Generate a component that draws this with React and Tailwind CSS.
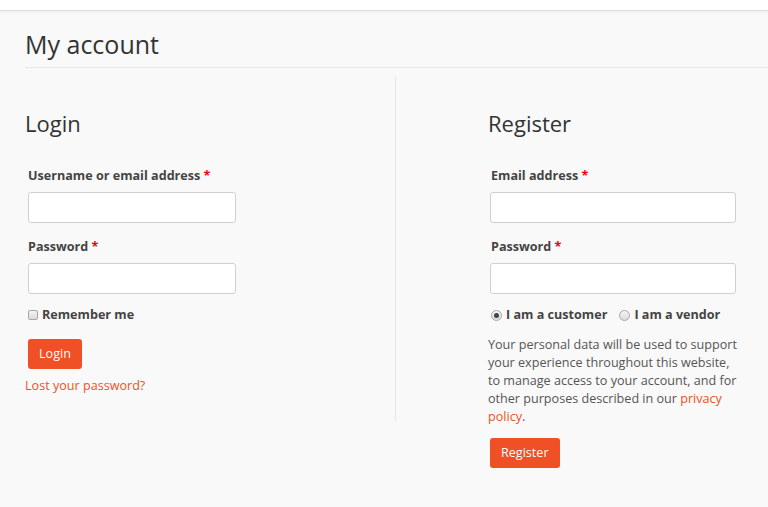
function Radio({ checked }) {
  return (
    <span className="inline-flex items-center justify-center w-[11px] h-[11px] rounded-full border border-[#a8a8a8] bg-gradient-to-b from-[#f4f4f4] to-[#dcdcdc]">
      {checked && <span className="w-[5px] h-[5px] rounded-full bg-[#444]" />}
    </span>
  );
}

export default function App() {
  return (
    <div className="min-h-[507px] bg-[#f9f9f9] text-[#444] font-['Open_Sans',sans-serif]">
      <div className="h-[11px] bg-white border-b border-[#dedede] shadow-[0_1px_3px_rgba(0,0,0,0.06)]" />
      <div className="pl-[25px]">
        <div className="border-b border-[#e8e8e8] pt-[16px] pb-[6px]">
          <h1 className="text-[25px] leading-[34px] font-normal text-[#333]">My account</h1>
        </div>
        <div className="flex items-start mt-[8px]">
          <div className="w-[371px] shrink-0 border-r border-[#e6e6e6] pb-[26px]">
            <h2 className="mt-[32px] text-[22px] leading-[30px] text-[#333]">Login</h2>
            <div className="pl-[3px] mt-[29px]">
              <label className="block text-[12.6px] font-bold leading-[18px]">
                Username or email address <span className="text-red-600">*</span>
              </label>
              <input className="block mt-[7px] w-[208px] h-[31px] bg-white border border-[#d0d0d0] rounded-[3px]" />
              <label className="block mt-[15px] text-[12.6px] font-bold leading-[18px]">
                Password <span className="text-red-600">*</span>
              </label>
              <input type="password" className="block mt-[7px] w-[208px] h-[31px] bg-white border border-[#d0d0d0] rounded-[3px]" />
              <label className="flex items-center gap-[4px] mt-[12px] text-[12.6px] font-bold leading-[18px]">
                <span className="w-[10px] h-[10px] rounded-[2px] border border-[#a8a8a8] bg-gradient-to-b from-[#f4f4f4] to-[#dcdcdc]" />
                Remember me
              </label>
              <button className="mt-[15px] h-[30px] px-[11px] rounded-[3px] bg-[#f05025] text-white text-[12.6px]">Login</button>
            </div>
            <a href="#" className="block mt-[8px] text-[12.6px] leading-[18px] text-[#f05025]">Lost your password?</a>
          </div>
          <div className="pl-[92px] pr-[16px] flex-1">
            <h2 className="mt-[32px] text-[22px] leading-[30px] text-[#333]">Register</h2>
            <div className="pl-[3px] mt-[29px]">
              <label className="block text-[12.6px] font-bold leading-[18px]">
                Email address <span className="text-red-600">*</span>
              </label>
              <input className="block mt-[7px] -ml-[1px] w-[246px] h-[31px] bg-white border border-[#d0d0d0] rounded-[3px]" />
              <label className="block mt-[15px] text-[12.6px] font-bold leading-[18px]">
                Password <span className="text-red-600">*</span>
              </label>
              <input type="password" className="block mt-[7px] -ml-[1px] w-[246px] h-[31px] bg-white border border-[#d0d0d0] rounded-[3px]" />
              <div className="flex items-center mt-[12px] text-[12.6px] font-bold leading-[18px]">
                <span className="flex items-center gap-[4px]">
                  <Radio checked />
                  I am a customer
                </span>
                <span className="flex items-center gap-[4px] ml-[12px]">
                  <Radio />
                  I am a vendor
                </span>
              </div>
            </div>
            <p className="mt-[12px] text-[12.6px] leading-[18px] text-[#555] w-[262px]">
              Your personal data will be used to support your experience throughout this website,<br />to manage access to your account, and for other purposes described in our <a href="#" className="text-[#f05025]">privacy policy</a>.
            </p>
            <button className="mt-[12px] ml-[2px] h-[30px] px-[11px] rounded-[3px] bg-[#f05025] text-white text-[12.6px]">Register</button>
          </div>
        </div>
      </div>
    </div>
  );
}
